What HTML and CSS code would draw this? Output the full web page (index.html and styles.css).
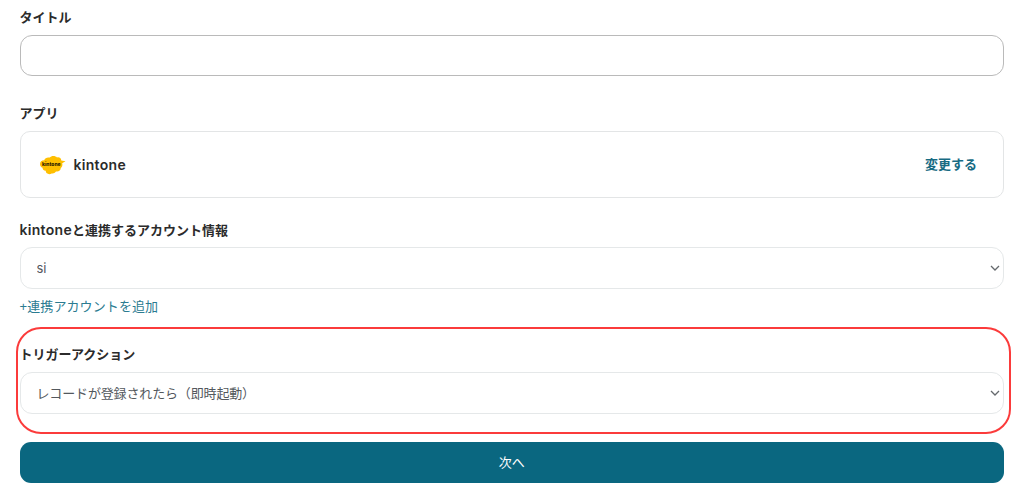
FILE: index.html
```
<!DOCTYPE html>
<html lang="ja">
<head>
    <meta charset="UTF-8">
    <meta name="viewport" content="width=device-width, initial-scale=1.0">
    <title>トリガー設定</title>
    <link rel="stylesheet" href="styles.css">
</head>
<body>
    <form class="form">
        <div class="field title-field">
            <label for="title">タイトル</label>
            <input type="text" id="title" class="control title-input">
        </div>

        <div class="field app-field">
            <span class="label">アプリ</span>
            <div class="app-card">
                <svg class="app-logo" width="27" height="20" viewBox="0 0 27 20" aria-hidden="true">
                    <path fill="#ffbf00" d="M1 9C1 6.500 2.500 5.200 5.200 5.200C6 2.700 8.500 2 10.700 2.600C12.200.4 16.500.5 18 2.500C20.200 1.900 22 3 22.300 5.600L26.500 6.200L23.200 8.200C23.900 10.500 22.900 12.300 21.800 13C21.700 15.600 19.500 16.900 17 16.400C15.500 18.600 13.500 18.200 12.600 18.400C10.500 20 6.700 18.900 6.700 15.800C4.500 15.500 3.500 14.400 3.600 12.700C1.800 12.200 1 10.800 1 9Z"/>
                    <text class="logo-text" x="3" y="10.800" textLength="18.500" lengthAdjust="spacingAndGlyphs">kintone</text>
                </svg>
                <span class="app-name">kintone</span>
                <a href="#" class="change-link">変更する</a>
            </div>
        </div>

        <div class="field account-field">
            <label for="account"><span class="latin">kintone</span>と連携するアカウント情報</label>
            <div class="select-box">
                <select id="account" class="control account-select">
                    <option>si</option>
                </select>
                <svg class="chevron" width="10" height="6" viewBox="0 0 10 6"><path d="M1 1L5 5L9 1"/></svg>
            </div>
            <a href="#" class="add-link">+連携アカウントを追加</a>
        </div>

        <!-- Highlighted section -->
        <div class="field trigger-field">
            <label for="trigger">トリガーアクション</label>
            <div class="select-box">
                <select id="trigger" class="control trigger-select">
                    <option>レコードが登録されたら（即時起動）</option>
                </select>
                <svg class="chevron" width="10" height="6" viewBox="0 0 10 6"><path d="M1 1L5 5L9 1"/></svg>
            </div>
        </div>

        <button type="submit">次へ</button>
    </form>
</body>
</html>
```

FILE: styles.css
```
* {
    margin: 0;
    padding: 0;
    box-sizing: border-box;
    font-family: "Liberation Sans", "Noto Sans CJK JP", sans-serif;
}

body {
    background: #fff;
    color: #2b2b2b;
    font-size: 13px;
}

.form {
    display: flex;
    flex-direction: column;
    padding: 8px 20px 20px 19.5px;
}

.field {
    display: flex;
    flex-direction: column;
}

.field label,
.field .label {
    height: 20px;
    margin-bottom: 7px;
    font-weight: 700;
    line-height: 20px;
}

.latin,
.app-name {
    font-family: Inter, sans-serif;
    font-weight: 600;
    font-size: 14px;
    letter-spacing: 0.3px;
}

.app-name {
    margin-bottom: 1px;
}

.control {
    width: 100%;
    height: 42px;
    padding: 0 16px;
    border: 1px solid #e5e8e9;
    border-radius: 12px;
    background: #fff;
    color: #53585d;
    font-size: 13px;
    outline: none;
    appearance: none;
}

.title-field {
    margin-bottom: 28px;
}

.title-input {
    height: 41px;
    border-color: #bababa;
}

.app-field {
    margin-bottom: 22px;
}

.account-field label {
    line-height: 19px;
}

.app-card {
    display: flex;
    align-items: center;
    height: 67px;
    padding: 0 26px 0 18px;
    border: 1px solid #e3e5e6;
    border-radius: 10px;
}

.app-logo {
    margin-right: 8px;
}

.logo-text {
    font-family: Inter, sans-serif;
    font-size: 5px;
    font-weight: 800;
    fill: #2b2100;
}

.change-link {
    margin: 0 0 2px auto;
    color: #176b83;
    font-weight: 700;
    text-decoration: none;
}

.select-box {
    position: relative;
}

.account-select {
    font-family: Inter, sans-serif;
}

.trigger-select {
    letter-spacing: -0.15px;
}

.chevron {
    position: absolute;
    top: 18px;
    right: 4px;
    fill: none;
    stroke: #65696d;
    stroke-width: 1.3;
    pointer-events: none;
}

.add-link {
    height: 20px;
    margin-top: 8px;
    color: #2b7b91;
    letter-spacing: 0.1px;
    line-height: 20px;
    text-decoration: none;
}

.trigger-field {
    height: 107px;
    margin: 10px -7px 8px -4px;
    padding: 16px 5px 0 2px;
    border: 2px solid #fb3b3b;
    border-radius: 25px;
}

button {
    height: 41px;
    padding-bottom: 3px;
    border: none;
    border-radius: 11px;
    background: #0a6780;
    color: #fff;
    font-size: 13px;
    cursor: pointer;
}
```
